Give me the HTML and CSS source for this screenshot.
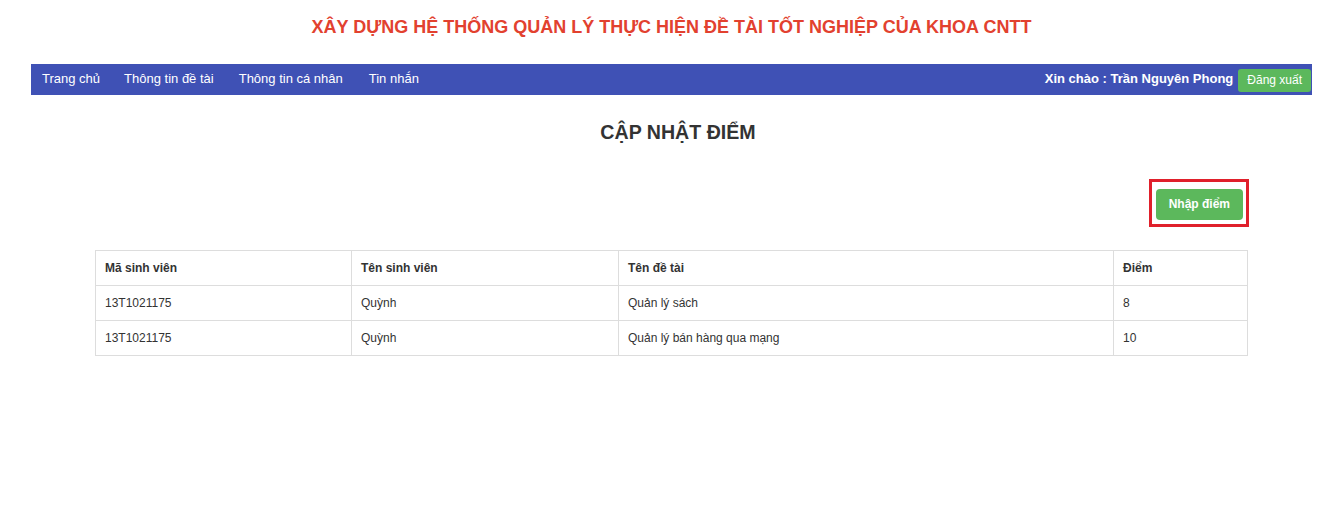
FILE: index.html
```html
<!DOCTYPE html>
<html lang="vi">
<head>
<meta charset="utf-8">
<title>Cập nhật điểm</title>
<link rel="stylesheet" href="styles.css">
</head>
<body>
<div class="page">
  <h1 class="site-title">XÂY DỰNG HỆ THỐNG QUẢN LÝ THỰC HIỆN ĐỀ TÀI TỐT NGHIỆP CỦA KHOA CNTT</h1>
  <nav class="navbar">
    <ul class="nav-links">
      <li><a href="#">Trang chủ</a></li>
      <li><a href="#">Thông tin đề tài</a></li>
      <li><a href="#">Thông tin cá nhân</a></li>
      <li><a href="#">Tin nhắn</a></li>
    </ul>
    <div class="nav-user">
      <span class="greeting">Xin chào : Trần Nguyên Phong</span>
      <a href="#" class="btn-logout">Đăng xuất</a>
    </div>
  </nav>
  <main class="content">
    <h2 class="page-heading">CẬP NHẬT ĐIỂM</h2>
    <div class="actions">
      <div class="highlight">
        <a href="#" class="btn-green">Nhập điểm</a>
      </div>
    </div>
    <table class="grid">
      <colgroup>
        <col class="c1"><col class="c2"><col class="c3"><col class="c4">
      </colgroup>
      <thead>
        <tr><th>Mã sinh viên</th><th>Tên sinh viên</th><th>Tên đề tài</th><th>Điểm</th></tr>
      </thead>
      <tbody>
        <tr><td>13T1021175</td><td>Quỳnh</td><td>Quản lý sách</td><td>8</td></tr>
        <tr><td>13T1021175</td><td>Quỳnh</td><td>Quản lý bán hàng qua mạng</td><td>10</td></tr>
      </tbody>
    </table>
  </main>
</div>
</body>
</html>
```

FILE: styles.css
```css
* { box-sizing: border-box; }
html, body { margin: 0; padding: 0; background: #fff; }
body {
  font-family: "Liberation Sans", Arial, sans-serif;
  color: #333;
}
.page {
  width: 1281px;
  margin-left: 31px;
}
.site-title {
  margin: 0;
  padding-top: 16px;
  height: 64px;
  text-align: center;
  font-size: 18px;
  font-weight: bold;
  color: #e2412f;
  line-height: 22px;
}
.navbar {
  display: flex;
  align-items: center;
  justify-content: space-between;
  height: 31px;
  background: #3f51b5;
  color: #fff;
}
.nav-links {
  list-style: none;
  margin: 0;
  padding: 0 0 3px 11px;
  display: flex;
  gap: 24px;
}
.nav-links li:nth-child(3) { margin-left: 1px; }
.nav-links li:nth-child(4) { margin-left: 2px; }
.nav-links a {
  color: #fff;
  text-decoration: none;
  font-size: 13px;
}
.nav-user {
  display: flex;
  align-items: center;
  gap: 5px;
  padding-right: 1px;
}
.greeting {
  font-size: 13px;
  font-weight: bold;
  padding-bottom: 2px;
}
.btn-logout {
  display: inline-block;
  background: #5cb85c;
  color: #fff;
  text-decoration: none;
  font-size: 12px;
  line-height: 23px;
  margin-top: 2px;
  padding: 0 9px;
  border-radius: 3px;
}
.content {
  padding: 0 65px 0 64px;
}
.page-heading {
  margin: 0;
  padding-top: 24px;
  height: 84px;
  text-align: center;
  font-size: 19.6px;
  line-height: 26px;
  font-weight: bold;
  color: #333;
  padding-left: 14px;
}
.actions {
  display: flex;
  justify-content: flex-end;
  margin-right: -2px;
  height: 71px;
}
.highlight {
  border: 3px solid #e0202b;
  padding: 7px 3px 4px 4px;
  height: 48px;
}
.btn-green {
  display: inline-block;
  background: #5cb85c;
  color: #fff;
  text-decoration: none;
  font-size: 12px;
  font-weight: bold;
  line-height: 31px;
  padding: 0 13px;
  border-radius: 4px;
}
.grid {
  width: 1152px;
  border-collapse: collapse;
  font-size: 12px;
  table-layout: fixed;
}
.grid .c1 { width: 256px; }
.grid .c2 { width: 267px; }
.grid .c3 { width: 495px; }
.grid .c4 { width: 134px; }
.grid th, .grid td {
  border: 1px solid #ddd;
  height: 35px;
  padding: 0 9px;
  text-align: left;
  vertical-align: middle;
  color: #333;
}
.grid th { font-weight: bold; }
```
